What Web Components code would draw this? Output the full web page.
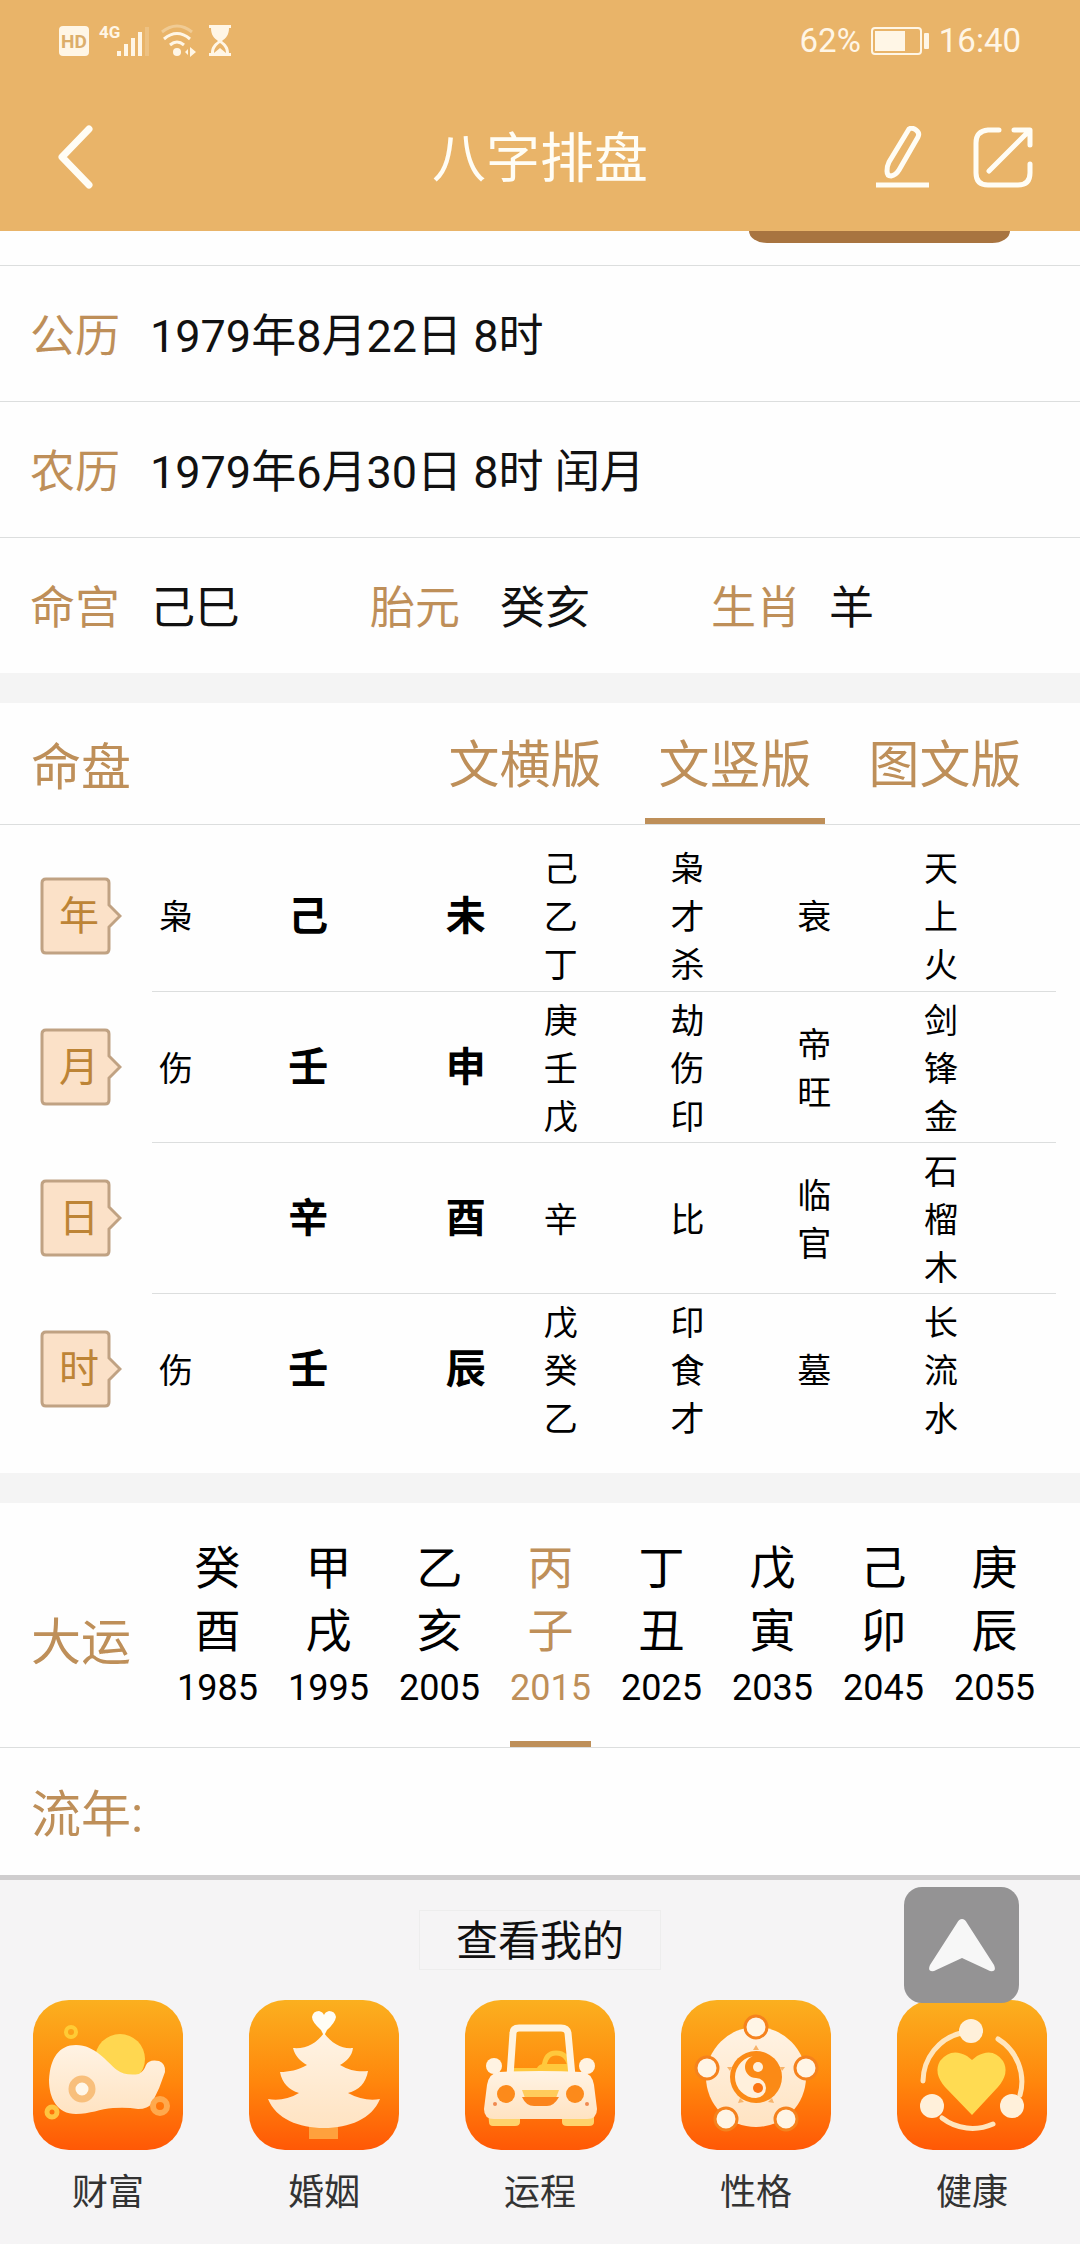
<!DOCTYPE html>
<html lang="zh-CN">
<head>
<meta charset="utf-8">
<meta name="viewport" content="width=device-width, initial-scale=1">
<title>八字排盘</title>
<style>
  html, body { margin: 0; background: #f5f4f5; }
  body {
    --gold: #be8f59;
    --line: #dcdede;
    --paper: #fefefe;
    --band: #f4f4f4;
    font-family: Roboto, "Noto Sans CJK SC", sans-serif;
    color: #111;
  }
</style>
</head>
<body>
<bazi-app></bazi-app>

<script>
const base = `
  *, *::before, *::after { box-sizing: border-box; }
  button { font: inherit; color: inherit; background: none; border: 0; padding: 0; margin: 0; cursor: pointer; }
  svg { display: block; }
`;
function define(name, css, html) {
  customElements.define(name, class extends HTMLElement {
    constructor() {
      super();
      const root = this.attachShadow({ mode: 'open' });
      root.innerHTML = `<style>${base}${css}</style>${typeof html === 'function' ? html(this) : html}`;
    }
  });
}

define('status-bar', `
  :host { display: flex; justify-content: space-between; align-items: center; height: 82px; padding: 0 59px; color: #fff6e6; font-size: 33px; line-height: 40px; }
  .side { display: flex; align-items: center; gap: 10px; }
`, `
  <div class="side">
    <svg width="174" height="36" viewBox="0 0 174 36" fill="#fff6e6">
      <rect x="0" y="3" width="30" height="30" rx="4"/>
      <text x="15" y="25" text-anchor="middle" font-family="Roboto" font-weight="700" font-size="19" fill="#dcae6b">HD</text>
      <text x="40" y="15" font-family="Roboto" font-weight="700" font-size="17">4G</text>
      <rect x="58" y="28" width="4" height="5"/><rect x="65" y="21" width="4" height="12"/>
      <rect x="72" y="15" width="4" height="18"/><rect x="79" y="9" width="4" height="24"/>
      <rect x="86" y="4" width="4" height="29" opacity=".2"/>
      <g fill="none" stroke="#fff6e6" stroke-width="3">
        <path d="M103 9Q118 -3 133 9" opacity=".35"/>
        <path d="M105 16Q118 5 131 16"/><path d="M111 22Q118 16 125 22"/>
      </g>
      <circle cx="118" cy="29" r="4"/>
      <path d="M131 24l6 5-6 5zM129 26v6l-3-3z"/>
      <path d="M150 2h22v3h-2c0 7-3 10-7 13 4 3 7 6 7 12h2v3h-22v-3h2c0-6 3-9 7-12-4-3-7-6-7-13h-2z"/>
      <path d="M155 30c0-5 3-8 6-10 3 2 6 5 6 10l-6-5z" fill="#e9b46a"/>
    </svg>
  </div>
  <div class="side">
    <span>62%</span>
    <svg width="58" height="28" viewBox="0 0 58 28"><rect x="1" y="1" width="49" height="26" rx="3" fill="none" stroke="#fff6e6" stroke-width="2"/><rect x="4" y="4" width="30" height="20" fill="#fff6e6"/><rect x="53" y="6" width="5" height="16" rx="1" fill="#fff6e6"/></svg>
    <span>16:40</span>
  </div>
`);

define('nav-bar', `
  :host { display: grid; grid-template-columns: 1fr auto 1fr; align-items: center; height: 149px; padding: 0 47px; color: #fffdf5; }
  h1 { margin: 0; padding-top: 6px; font-size: 54px; line-height: 70px; font-weight: 400; }
  .left { justify-self: start; padding-left: 7px; }
  .right { display: flex; justify-content: flex-end; gap: 42px; }
`, `
  <button class="left" aria-label="返回"><svg width="40" height="66" viewBox="0 0 40 66" fill="none" stroke="#fffdf5" stroke-width="7" stroke-linecap="round" stroke-linejoin="round"><path d="M35 5L8 33 35 61"/></svg></button>
  <h1><slot></slot></h1>
  <div class="right">
    <button aria-label="编辑"><svg width="58" height="62" viewBox="0 0 58 62" fill="none" stroke="#fffdf5" stroke-width="5" stroke-linejoin="round"><path d="M36 3q3-2 7 1 4 3 2 7L26 44q-3 5-8 6-4 0-4-5 0-5 2-9z"/><path d="M3 59h53"/></svg></button>
    <button aria-label="分享"><svg width="60" height="62" viewBox="0 0 60 62" fill="none" stroke="#fffdf5" stroke-width="5" stroke-linecap="round" stroke-linejoin="round"><path d="M26 4H15Q3 5 3 17V47Q3 59 15 59H45Q57 59 57 47V38"/><path d="M41 4H57V19M56 5L16 45"/></svg></button>
  </div>
`);

define('info-row', `
  :host { display: block; border-bottom: 1px solid var(--line); font-size: 45px; line-height: 64px; padding: 39px 30px 32px; }
  :host([last]) { border-bottom: 0; }
  dl { margin: 0; display: grid; grid-template-columns: 120fr 900fr; }
  :host([triple]) dl { grid-template-columns: 120fr 220fr 130fr 211fr 118fr 221fr; }
  dt { color: var(--gold); }
  dd { margin: 0; }
  dt, dd { white-space: nowrap; }
`, el => `<dl>${el.dataset.items.split('|').map((t, i) => i % 2 ? `<dd>${t}</dd>` : `<dt>${t}</dt>`).join('')}</dl>`);

define('plate-tabs', `
  :host { display: flex; align-items: stretch; height: 122px; padding: 0 45px 0 31px; border-bottom: 1px solid var(--line); color: var(--gold); font-size: 50px; line-height: 70px; }
  h2 { margin: 0 auto 0 0; font: inherit; padding-top: 30px; }
  .tabs { display: flex; gap: 30px; font-size: 51px; }
  button { width: 180px; padding: 10px 0 0; border-bottom: 6px solid transparent; }
  button[aria-selected=true] { border-color: var(--gold); }
`, `
  <h2>命盘</h2>
  <div class="tabs" role="tablist">
    <button role="tab" aria-selected="false">文横版</button>
    <button role="tab" aria-selected="true">文竖版</button>
    <button role="tab" aria-selected="false">图文版</button>
  </div>
`);

define('pillar-badge', `
  :host { display: grid; width: 82px; height: 78px; color: #bd8436; font-size: 40px; line-height: 60px; }
  svg, span { grid-area: 1 / 1; }
  span { align-self: center; padding: 2px 0 0 19px; font-weight: 400; text-align: left; }
`, `
  <svg width="82" height="78" viewBox="0 0 82 78" fill="#fbe1c8" stroke="#c0a283" stroke-width="3"><path d="M6 2H65Q69 2 69 6V28L80 39 69 50V72Q69 76 65 76H6Q2 76 2 72V6Q2 2 6 2Z"/></svg>
  <span><slot></slot></span>
`);

const pillars = [
  ['年', '枭', '己', '未', '己乙丁', '枭才杀', '衰', '天上火'],
  ['月', '伤', '壬', '申', '庚壬戊', '劫伤印', '帝旺', '剑锋金'],
  ['日', '', '辛', '酉', '辛', '比', '临官', '石榴木'],
  ['时', '伤', '壬', '辰', '戊癸乙', '印食才', '墓', '长流水'],
];
define('pillar-table', `
  :host { display: block; padding: 15px 24px 28px 0; color: #000; }
  table { width: 100%; border-collapse: collapse; table-layout: fixed; }
  th, td { height: 151px; padding: 0; vertical-align: middle; text-align: left; }
  th { padding-left: 40px; }
  td { padding-top: 4px; border-bottom: 1px solid var(--line); font-size: 34px; line-height: 48px; }
  tr:last-child td { border-bottom-color: transparent; }
  td:nth-child(2) { padding-left: 7px; }
  .v { display: block; width: 1em; word-break: break-all; }
  b { font-size: 40px; font-weight: 700; }
`, `
  <table>
    <colgroup><col style="width:14.4%"><col style="width:12.9%"><col style="width:14.9%"><col style="width:9.3%"><col style="width:12%"><col style="width:12%"><col style="width:12%"><col style="width:12.5%"></colgroup>
    <tbody>${pillars.map(r => `<tr><th scope="row"><pillar-badge>${r[0]}</pillar-badge></th>${r.slice(1).map((c, i) => `<td>${i === 1 || i === 2 ? `<b>${c}</b>` : `<span class="v">${c}</span>`}</td>`).join('')}</tr>`).join('')}</tbody>
  </table>
`);

const decades = [['癸酉', 1985], ['甲戌', 1995], ['乙亥', 2005], ['丙子', 2015], ['丁丑', 2025], ['戊寅', 2035], ['己卯', 2045], ['庚辰', 2055]];
define('luck-cycles', `
  :host { display: flex; justify-content: space-between; height: 245px; padding: 0 45px 0 31px; border-bottom: 1px solid var(--line); }
  h2 { margin: 0; align-self: center; padding-top: 36px; font-size: 50px; line-height: 70px; font-weight: 400; color: var(--gold); }
  .list { display: flex; gap: 30px; }
  button { width: 81px; display: flex; flex-direction: column; align-items: center; padding-top: 34px; color: #000; border-bottom: 6px solid transparent; }
  button[aria-pressed=true] { color: var(--gold); border-color: var(--gold); }
  .gz { width: 1em; font-size: 46px; line-height: 63px; word-break: break-all; }
  .yr { font-size: 36px; line-height: 50px; }
`, `
  <h2>大运</h2>
  <div class="list">${decades.map(([g, y]) => `<button aria-pressed="${y === 2015}"><span class="gz">${g}</span><span class="yr">${y}</span></button>`).join('')}</div>
`);

define('year-line', `
  :host { display: block; height: 127px; padding: 32px 31px; color: var(--gold); font-size: 50px; line-height: 70px; }
`, `<slot></slot>`);

const icons = {
  wealth: `<circle cx="87" cy="59" r="25" fill="#ffd750"/>
    <path d="M43 45C62 45 74 62 84 70Q92 76 106 74Q111 71 113 65Q116 59 126 61Q133 64 132 72Q127 88 119 103Q115 109 105 109Q94 107 80 108C67 109 57 114 43 114C24 114 16 98 16 80C17 58 26 45 43 45Z" fill="url(#cream)"/>
    <circle cx="49" cy="89" r="10" fill="#fff7ea" stroke="#f8bf7c" stroke-width="7"/>
    <circle cx="38" cy="32" r="5" fill="none" stroke="#ffcb35" stroke-width="4"/>
    <circle cx="19" cy="112" r="5" fill="none" stroke="#ffc440" stroke-width="5"/>
    <circle cx="127" cy="106" r="7" fill="none" stroke="#ffa94d" stroke-width="6"/>`,
  marriage: `<path d="M60 124h29v15h-29z" fill="#ffa13d"/>
    <path d="M75 33C83 44 93 49 104 48C103 56 98 61 91 65C101 71 110 72 119 71C117 83 110 90 99 93C110 99 121 101 131 99C123 119 100 128 75 128C50 128 27 119 19 99C29 101 40 99 50 93C40 90 33 83 31 72C40 72 49 70 58 65C51 61 46 56 44 48C57 49 67 44 75 33Z" fill="url(#cream)"/>
    <path d="M75 36L72 30Q63 22 63 17Q64 11 70 11Q74 12 75 15Q76 12 80 11Q86 11 87 17Q86 23 78 30Z" fill="#fffdf5"/>`,
  fortune: `<path d="M48 68H72Q74 64 79 64H107V76H48Z" fill="#ffc83c"/>
    <path d="M79 68Q80 53 91 53Q103 53 105 68" fill="none" stroke="#ffc83c" stroke-width="5"/>
    <path d="M45 76L48 33Q48 28 54 28H96Q102 28 103 33L107 76" fill="none" stroke="#fff3df" stroke-width="7"/>
    <circle cx="29" cy="66" r="8" fill="#fff3e2"/><circle cx="122" cy="66" r="8" fill="#fff3e2"/>
    <path d="M23 112h32v10q0 4-5 4H28q-4 0-4-4zM97 112h32v10q0 4-5 4h-22q-5 0-5-4z" fill="#ffd36b"/>
    <path d="M34 72Q75 70 117 72Q127 73 129 85L132 109Q132 119 122 119H29Q19 119 19 109L22 85Q24 73 34 72Z" fill="url(#cream)"/>
    <path d="M57 90H94L91 98H60Z" fill="#ffcc5c"/><path d="M57 97H94Q89 106 82 106H69Q61 106 57 97Z" fill="#fb841c"/>
    <circle cx="41" cy="94" r="9" fill="#fc8a1b"/><circle cx="110" cy="94" r="9" fill="#fc8a1b"/>
    <circle cx="30" cy="104" r="2" fill="#f08a50"/><circle cx="122" cy="104" r="2" fill="#f08a50"/>`,
  character: `<circle cx="75" cy="77" r="50" fill="url(#cream)"/>
    <path d="M75 45l3 5h-6zM46 67l5 0-2 4zM104 67l-5 0 2 4zM57 103l2-5 4 4zM93 103l-2-5-4 4z" fill="#f7b36a"/>
    <circle cx="75" cy="77" r="26" fill="#fb8a16"/>
    <path d="M75 56A11 11 0 0 0 75 78A10 10 0 0 1 75 98A21 21 0 0 1 75 56Z" fill="#fff0dc"/>
    <circle cx="77" cy="67" r="5" fill="#fff0dc"/><circle cx="77" cy="88" r="5" fill="#fb7514"/>
    <g fill="#fff5e6" stroke="#f5821d" stroke-width="3"><circle cx="75" cy="27" r="11"/><circle cx="26" cy="68" r="11"/><circle cx="125" cy="68" r="11"/><circle cx="45" cy="119" r="11"/><circle cx="105" cy="119" r="11"/></g>`,
  health: `<path d="M75 115L48 87Q36 73 43 61Q54 47 70 56L75 60L80 56Q96 47 106 61Q113 73 101 87Z" fill="#ffdb52"/>
    <g fill="none" stroke="#ffe5bd" stroke-width="5" stroke-linecap="round"><path d="M26 81A50 50 0 0 1 64 33"/><path d="M101 39A50 50 0 0 1 123 95"/><path d="M45 118A50 50 0 0 0 96 124"/></g>
    <g fill="#fff0da"><circle cx="74" cy="31" r="12"/><circle cx="35" cy="106" r="12"/><circle cx="115" cy="106" r="12"/></g>`,
};
define('app-tile', `
  :host { display: block; flex: 1; }
  button { display: flex; flex-direction: column; align-items: center; gap: 18px; width: 100%; font-size: 36px; line-height: 50px; color: #333; }
`, el => `
  <button>
    <svg width="150" height="150" viewBox="0 0 150 150" aria-hidden="true">
      <defs>
        <linearGradient id="bg" x1="0" y1="0" x2="0" y2="1"><stop stop-color="#fbb01f"/><stop offset=".55" stop-color="#ff860c"/><stop offset="1" stop-color="#ff5806"/></linearGradient>
        <linearGradient id="cream" x1="0" y1="0" x2="0" y2="1"><stop stop-color="#fff3e4"/><stop offset="1" stop-color="#ffe3c2"/></linearGradient>
      </defs>
      <rect width="150" height="150" rx="36" fill="url(#bg)"/>${icons[el.getAttribute('icon')]}
    </svg>
    <span><slot></slot></span>
  </button>
`);

define('top-button', `
  :host { display: block; }
  button { display: grid; place-items: center; width: 115px; height: 116px; border-radius: 18px; background: #949394; }
`, `<button aria-label="回到顶部"><svg width="68" height="54" viewBox="0 0 68 54"><path d="M34 1Q37 1 39 5L66 47Q69 54 62 53L34 40 6 53Q-1 54 2 47L29 5Q31 1 34 1Z" fill="#f7f7f7"/></svg></button>`);

define('bottom-dock', `
  :host { display: block; position: relative; border-top: 5px solid #cfcdce; background: #f5f4f5; padding: 30px 0 25px; }
  h2 { width: fit-content; margin: 0 auto 30px; padding: 3px 36px 0; border: 1px solid #ededed; font-size: 42px; line-height: 55px; font-weight: 400; color: #111; }
  nav { display: flex; }
  top-button { position: absolute; top: 7px; right: 61px; }
`, `
  <h2>查看我的</h2>
  <nav>
    <app-tile icon="wealth">财富</app-tile>
    <app-tile icon="marriage">婚姻</app-tile>
    <app-tile icon="fortune">运程</app-tile>
    <app-tile icon="character">性格</app-tile>
    <app-tile icon="health">健康</app-tile>
  </nav>
  <top-button></top-button>
`);

define('bazi-app', `
  :host { display: block; }
  header { background: #e9b469; }
  section { background: var(--paper); }
  section + section { border-top: 30px solid var(--band); }
  .peek { display: flex; justify-content: flex-end; height: 35px; padding-right: 70px; border-bottom: 1px solid var(--line); }
  .peek i { width: 261px; height: 12px; border-radius: 0 0 18px 18px / 0 0 12px 12px; background: #a87440; }
`, `
  <header><status-bar></status-bar><nav-bar>八字排盘</nav-bar></header>
  <main>
    <section>
      <div class="peek"><i></i></div>
      <info-row data-items="公历|1979年8月22日 8时"></info-row>
      <info-row data-items="农历|1979年6月30日 8时 闰月"></info-row>
      <info-row last triple data-items="命宫|己巳|胎元|癸亥|生肖|羊"></info-row>
    </section>
    <section><plate-tabs></plate-tabs><pillar-table></pillar-table></section>
    <section><luck-cycles></luck-cycles><year-line>流年:</year-line></section>
  </main>
  <bottom-dock></bottom-dock>
`);
</script>
</body>
</html>
